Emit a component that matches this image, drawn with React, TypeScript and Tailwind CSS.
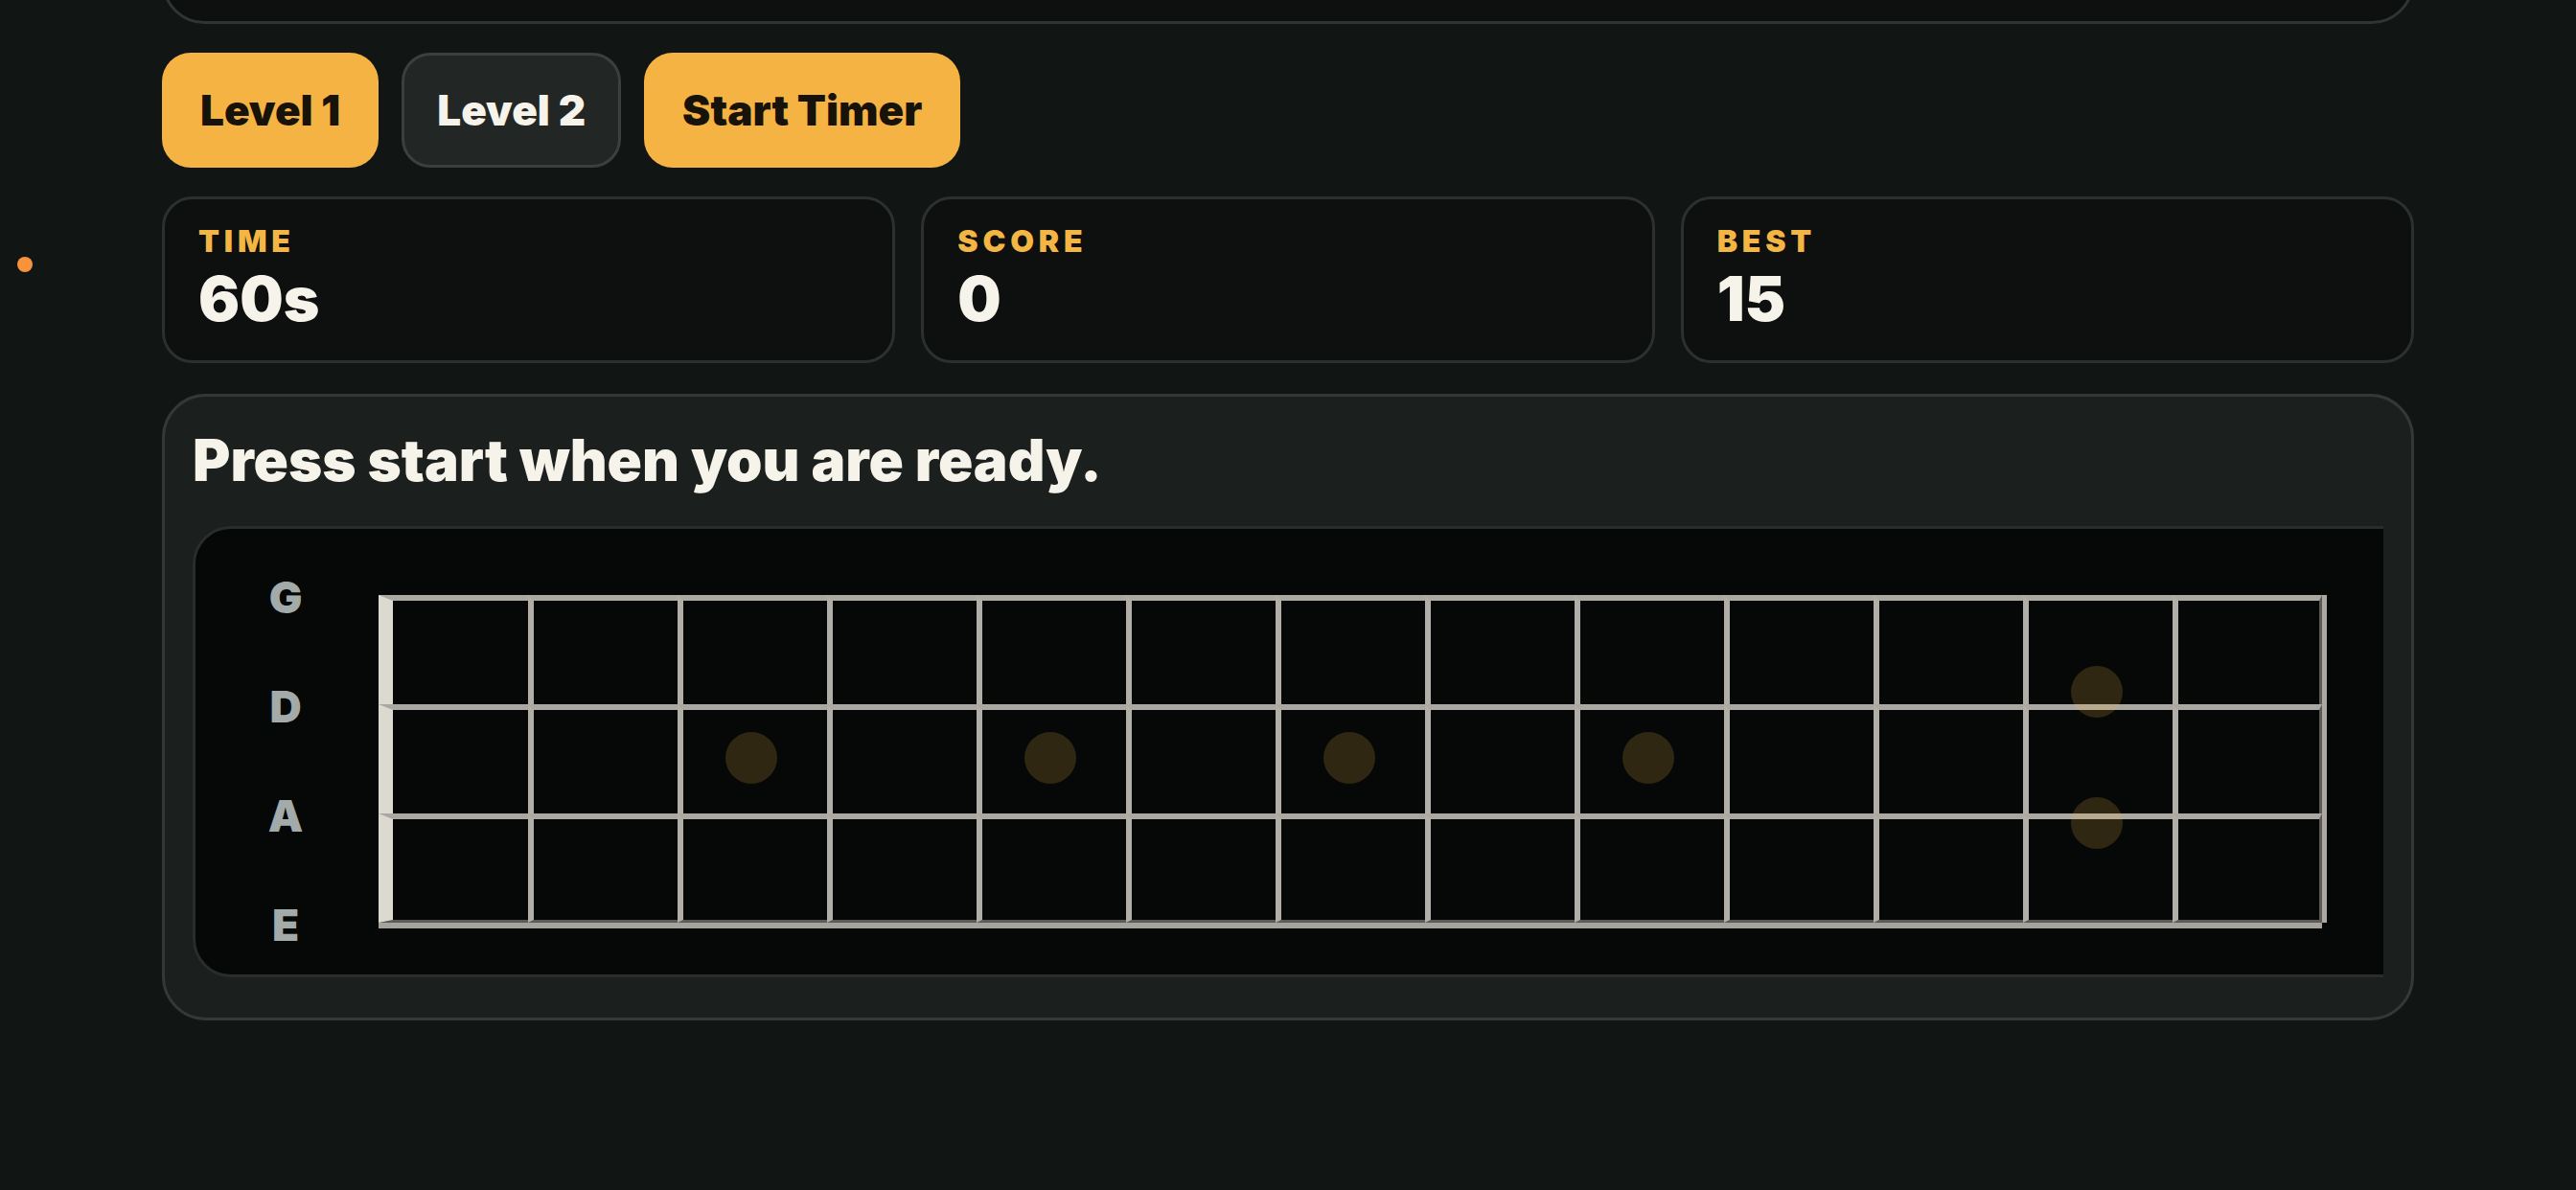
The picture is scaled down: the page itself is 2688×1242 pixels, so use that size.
import React from 'react';

const STRINGS = ['G', 'D', 'A', 'E'];
const FRETS = 13;
const CELL_W = 156;

// fret markers: column index + vertical center (px from top of board)
const MARKERS = [
  { col: 2, y: 170 },
  { col: 4, y: 170 },
  { col: 6, y: 170 },
  { col: 8, y: 170 },
  { col: 11, y: 101 },
  { col: 11, y: 238 },
];

function StatCard({ label, value }: { label: string; value: string }) {
  return (
    <div className="rounded-[32px] border-[3px] border-[#2c302e] bg-[#0d100f] pl-[35px] pt-[24px] pb-[28px]">
      <div className="text-[32px] leading-[40px] font-black tracking-[0.15em] text-[#f3b544]">{label}</div>
      <div className="mt-[4px] text-[64px] leading-[72px] font-black text-[#f6f3ea]">{value}</div>
    </div>
  );
}

function Fretboard() {
  return (
    <div className="relative flex items-start">
      <div className="flex flex-col">
        {[0, 1, 2].map((row) => (
          <div key={row} className="flex">
            {Array.from({ length: FRETS }).map((_, col) => (
              <div
                key={col}
                className={`w-[156px] h-[114px] border-t-[6px] border-t-[#aaa8a0] ${
                  col === 0 ? 'border-l-[15px] border-l-[#dcd9d1]' : 'border-l-[6px] border-l-[#b0aea6]'
                } ${row === 2 ? 'border-b-[3px] border-b-[#5a5b56]' : ''} ${
                  col === FRETS - 1 ? 'border-r-[3px] border-r-[#5a5b56]' : ''
                }`}
              />
            ))}
          </div>
        ))}
        <div className="h-[6px] bg-[#a5a39c]" />
      </div>
      <div className="w-[5px] h-[342px] bg-[#aaa8a0]" />

      {MARKERS.map((m, i) => (
        <span
          key={i}
          className="absolute w-[54px] h-[54px] rounded-full bg-[rgba(242,181,68,0.18)]"
          style={{ left: 50 + CELL_W * m.col, top: m.y - 27 }}
        />
      ))}
    </div>
  );
}

export default function App() {
  return (
    <div className="relative min-h-screen overflow-hidden bg-[#111514] font-['Inter','Noto_Sans',sans-serif]">
      <span className="absolute left-[18px] top-[268px] w-[16px] h-[16px] rounded-full bg-[#f7933a]" />

      <div className="w-[2350px] mx-auto flex flex-col gap-[30px]">
        {/* previous panel, scrolled mostly out of view */}
        <div className="-mt-[175px] h-[200px] rounded-[44px] border-[3px] border-[#303432] bg-[#0d100f]" />

        {/* Controls */}
        <div className="flex gap-[24px]">
          <button className="h-[120px] px-[40px] rounded-[30px] bg-[#f4b342] text-[44px] font-black text-[#17120a]">
            Level 1
          </button>
          <button className="h-[120px] px-[34px] rounded-[30px] border-[3px] border-[#3c3f3e] bg-[#222625] text-[44px] font-black text-[#f6f3ea]">
            Level 2
          </button>
          <button className="h-[120px] px-[40px] rounded-[30px] bg-[#f4b342] text-[44px] font-black text-[#17120a]">
            Start Timer
          </button>
        </div>

        {/* Stats */}
        <div className="grid grid-cols-3 gap-[27px]">
          <StatCard label="TIME" value="60s" />
          <StatCard label="SCORE" value="0" />
          <StatCard label="BEST" value="15" />
        </div>

        {/* Board */}
        <div className="mt-[2px] rounded-[46px] border-[3px] border-[#343836] bg-[#1b1f1d] px-[29px] pt-[30px] pb-[42px]">
          <h2 className="text-[60px] leading-[72px] font-black text-[#f6f3ea]">
            Press start when you are ready.
          </h2>
          <div className="mt-[33px] overflow-hidden">
            <div className="w-[2400px] h-[471px] rounded-[40px] border-[3px] border-[#2a2d2b] bg-[#060808] flex items-center pl-[64px] pt-[20px]">
              <div className="w-[60px] h-[402px] flex flex-col justify-between">
                {STRINGS.map((s) => (
                  <div key={s} className="h-[60px] flex items-center justify-center text-[46px] font-black text-[#a3abaa]">
                    {s}
                  </div>
                ))}
              </div>
              <div className="ml-[67px]">
                <Fretboard />
              </div>
            </div>
          </div>
        </div>
      </div>
    </div>
  );
}
